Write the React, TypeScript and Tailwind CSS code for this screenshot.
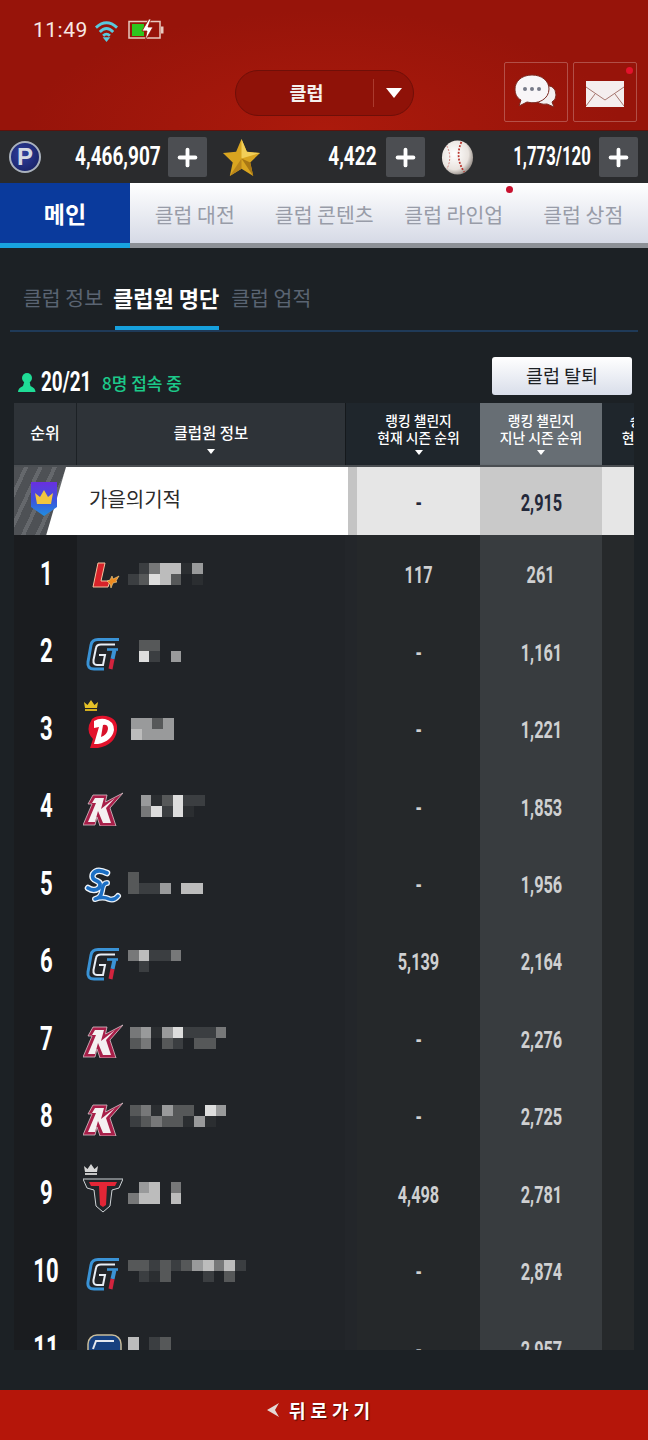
import type { ReactNode } from "react";
import { Plus } from "lucide-react";

const SHADES: Record<string, string> = {
  ".": "bg-transparent",
  "1": "bg-[#2b2e31]",
  "2": "bg-[#3b3e41]",
  "3": "bg-[#565859]",
  "4": "bg-[#777879]",
  "5": "bg-[#999a9b]",
  "6": "bg-[#bcbcbc]",
  "7": "bg-[#dddddd]",
};

type Team = "L" | "G" | "D" | "K" | "SL" | "T" | "B";

type Member = {
  rank: number;
  team: Team;
  crown?: "gold" | "silver";
  name: [string, string];
  offset: string;
  current: string;
  last: string;
};

const MEMBERS: Member[] = [
  { rank: 1, team: "L", name: [".246615", "23763.1"], offset: "ml-[5px]", current: "117", last: "261" },
  { rank: 2, team: "G", name: [".33", ".72.5"], offset: "ml-[5px]", current: "-", last: "1,161" },
  { rank: 3, team: "D", name: ["5535", "6555"], offset: "ml-[8px]", current: "-", last: "1,221", crown: "gold" },
  { rank: 4, team: "K", name: [".513722", ".47271"], offset: "ml-[7px]", current: "-", last: "1,853" },
  { rank: 5, team: "SL", name: ["3", "3225.66"], offset: "ml-[5px]", current: "-", last: "1,956" },
  { rank: 6, team: "G", name: ["46224", ".2..."], offset: "ml-[5px]", current: "5,139", last: "2,164" },
  { rank: 7, team: "K", name: ["451572224", "34.32.33"], offset: "ml-[7px]", current: "-", last: "2,276" },
  { rank: 8, team: "K", name: ["341533.75", "23433151"], offset: "ml-[7px]", current: "-", last: "2,725" },
  { rank: 9, team: "T", name: [".56.4", "466.6"], offset: "ml-[5px]", current: "4,498", last: "2,781", crown: "silver" },
  { rank: 10, team: "G", name: ["33232356462", ".213...2.3"], offset: "ml-[5px]", current: "-", last: "2,874" },
  { rank: 11, team: "B", name: ["6.23", "6.23"], offset: "ml-[5px]", current: "-", last: "2,957" },
];

const Mosaic = ({ rows, className }: { rows: [string, string]; className: string }) => (
  <div className={`flex flex-col ${className}`}>
    {rows.map((row, i) => (
      <div key={i} className="flex h-[11px]">
        {row.split("").map((c, j) => (
          <div key={j} className={`w-[10.7px] h-[11px] ${SHADES[c] ?? "bg-transparent"}`} />
        ))}
      </div>
    ))}
  </div>
);

const TeamLogo = ({ team }: { team: Team }) => {
  if (team === "L") {
    return (
      <svg viewBox="0 0 40 40" className="w-10 h-10">
        <path d="M15 9h7l-4 18h9l-2 6H10z" fill="#d8232a" stroke="#f6c3a0" strokeWidth="1" />
        <path d="M24 27l3-1 2-4 1 3 6-3-3 5 1 1-4 1-2 5-1-4z" fill="#ee8a1f" stroke="#f5d28a" strokeWidth=".6" />
      </svg>
    );
  }
  if (team === "G") {
    return (
      <svg viewBox="0 0 40 40" className="w-10 h-10" fill="none">
        <path d="M36 8.500H15Q9 8.500 8 14L5 31Q4 38 11 38H21" stroke="#3a93d6" strokeWidth="3" />
        <path d="M32 13.500H18Q13.500 13.500 13 17L10.500 29Q10 34 14 34H20L22 24H16" stroke="#e9eef5" strokeWidth="2" />
        <path d="M24 18.500H35" stroke="#3a93d6" strokeWidth="2.600" />
        <path d="M31.500 19L29.500 28" stroke="#3a93d6" strokeWidth="4" />
        <path d="M29.500 28L27.500 38" stroke="#d3243e" strokeWidth="4" />
      </svg>
    );
  }
  if (team === "D") {
    return (
      <svg viewBox="0 0 40 40" className="w-10 h-10">
        <path d="M9 10Q14 6 23 7Q35 9 34 21Q32 36 15 39L7 39L10 30Q4 24 6 16Z" fill="#e3122c" />
        <path d="M11 12Q16 9 22 10Q31 12 31 21Q29 32 15 35L11 35L16 18L11 19Z" fill="#ffffff" />
        <path d="M20 16Q25 15 25 20Q24 26 18 28Z" fill="#d8112a" />
      </svg>
    );
  }
  if (team === "K") {
    return (
      <svg viewBox="0 0 40 40" className="w-10 h-10">
        <path d="M10 9H24L22.500 16L40 7L27 22L33 40H17L14 31L12 39H0L9 18H5Z" fill="#a81f49" stroke="#d8c4ca" strokeWidth=".8" />
        <path d="M12 12H21L18 23L32 12L23 22L28 37H20L15 25L12 36H5L13 17H9Z" fill="#f4f0f1" />
      </svg>
    );
  }
  if (team === "SL") {
    return (
      <svg viewBox="0 0 40 40" className="w-10 h-10" fill="none" strokeLinecap="round" strokeLinejoin="round">
        <path d="M24 10Q14 5 10 11Q8 16 14 18Q19 20 16 25Q11 29 5 25" stroke="#eef4fa" strokeWidth="6.500" />
        <path d="M24 20Q20 20 19 28Q18 35 12 36Q20 33 26 36Q31 38 35 33" stroke="#eef4fa" strokeWidth="6" />
        <path d="M24 10Q14 5 10 11Q8 16 14 18Q19 20 16 25Q11 29 5 25" stroke="#1c6fc4" strokeWidth="3.800" />
        <path d="M24 20Q20 20 19 28Q18 35 12 36Q20 33 26 36Q31 38 35 33" stroke="#1c6fc4" strokeWidth="3.400" />
      </svg>
    );
  }
  if (team === "T") {
    return (
      <svg viewBox="0 0 40 40" className="w-10 h-10">
        <path d="M0 6H40L36 15L29 17L27 33L20 39L13 33L11 17L4 15Z" fill="#22262a" stroke="#cfd3d6" strokeWidth="1" />
        <path d="M6 9H34L32 13H24L23 32L20 34L17 32L16 13H8Z" fill="#e32636" />
      </svg>
    );
  }
  return (
    <svg viewBox="0 0 40 40" className="w-10 h-10">
      <rect x="5" y="7" width="33" height="30" rx="9" fill="#17407f" stroke="#c9bc9a" strokeWidth="1.500" />
      <path d="M10 21L13 13H31" fill="none" stroke="#e5e8ef" strokeWidth="2" />
    </svg>
  );
};

const Crown = ({ color }: { color: "gold" | "silver" }) => (
  <svg viewBox="0 0 16 11" className="absolute -top-[9px] left-0 w-4 h-[11px]">
    <path d="M1 2l3.500 3L8 0l3.500 5L15 2l-1 6H2z" fill={color === "gold" ? "#e6c228" : "#d6d6d6"} />
    <rect x="2" y="9" width="12" height="2" fill={color === "gold" ? "#d2ae1e" : "#c4c4c4"} />
  </svg>
);

const Num = ({ children, className }: { children: ReactNode; className: string }) => (
  <span className={`inline-block whitespace-nowrap font-['Roboto',sans-serif] font-bold ${className}`}>{children}</span>
);

const PlusButton = () => (
  <div className="flex items-center justify-center w-[39px] h-[40px] shrink-0 rounded-[2px] bg-[#4c4e52]">
    <Plus size={27} strokeWidth={3.4} className="text-white" />
  </div>
);

const Caret = () => (
  <div className="mx-auto mt-[4px] w-0 h-0 border-x-[4px] border-x-transparent border-t-[5px] border-t-white" />
);

const Wifi = () => (
  <svg viewBox="0 0 26 24" className="w-[25px] h-[23px]" fill="none" stroke="#59c9de" strokeWidth="3">
    <path d="M2 9Q13-1 24 9" />
    <path d="M6 13.500Q13 6.500 20 13.500" />
    <path d="M9.500 17.500Q13 14 16.500 17.500" />
    <path d="M13 24l-4-5h8z" fill="#59c9de" stroke="none" />
  </svg>
);

const Battery = () => (
  <svg viewBox="0 0 36 22" className="w-[36px] h-[22px]">
    <rect x="1" y="2.500" width="31" height="16.500" fill="none" stroke="#e7c9bf" strokeWidth="1.500" />
    <rect x="4" y="5" width="12" height="12" fill="#2ec51d" />
    <rect x="33" y="7.500" width="2.500" height="7" fill="#e7c9bf" />
    <path d="M21 0l-7 12h5l-2 10 8-14h-5l3-8z" fill="#ffffff" stroke="#971409" strokeWidth=".8" />
  </svg>
);

const ChatIcon = () => (
  <svg viewBox="0 0 44 36" className="w-[44px] h-[36px]">
    <path d="M26 12Q42 9 42 21Q42 26 38 28L40 33L33 30Q26 31 23 27Z" fill="#f3eff0" stroke="#7b2a22" strokeWidth="1" />
    <path d="M18 1C7 1 1 8 1 15C1 20 3 24 7 26L5 32L13 28C24 31 35 25 35 15C35 7 28 1 18 1Z" fill="#f8f6f8" stroke="#7b2a22" strokeWidth="1" />
    <circle cx="11" cy="15" r="2" fill="#767a88" />
    <circle cx="18" cy="15" r="2" fill="#767a88" />
    <circle cx="25" cy="15" r="2" fill="#767a88" />
  </svg>
);

const MailIcon = () => (
  <svg viewBox="0 0 38 26" className="w-[38px] h-[26px] mt-[3px]">
    <rect x="0" y="0" width="38" height="26" fill="#f4eeee" />
    <path d="M0 6L19 19L38 6M0 25L9 13M38 25L29 13" fill="none" stroke="#a5766f" strokeWidth="1" />
  </svg>
);

const PCoin = () => (
  <div className="flex items-center justify-center w-[32px] h-[32px] shrink-0 rounded-full border-2 border-[#aab2bd] bg-[radial-gradient(circle_at_40%_40%,#2f3f9e,#141c5a)]">
    <span className="font-['Liberation_Sans',sans-serif] font-bold text-[24px] leading-none text-[#d5d9e2]">P</span>
  </div>
);

const StarIcon = () => (
  <svg viewBox="0 0 40 40" className="w-[39px] h-[39px] shrink-0">
    <path d="M20 1l5.500 13L39 15.500 29 25l3 14-12-7.500L8 39l3-14L1 15.500 14.500 14z" fill="#d9a520" />
    <path d="M20 1l5.500 13L39 15.500 20 21z" fill="#f2cf58" />
    <path d="M20 21L8 39l12-7.500z" fill="#b9851a" />
    <path d="M20 21l12 18-3-14z" fill="#a87714" />
  </svg>
);

const BallIcon = () => (
  <svg viewBox="0 0 34 36" className="w-[33px] h-[35px] shrink-0">
    <defs>
      <radialGradient id="ball" cx="40%" cy="40%" r="65%">
        <stop offset="0%" stopColor="#ffffff" />
        <stop offset="70%" stopColor="#e9e3de" />
        <stop offset="100%" stopColor="#8f8781" />
      </radialGradient>
    </defs>
    <ellipse cx="17" cy="18" rx="16" ry="17.500" fill="url(#ball)" />
    <path d="M21 2Q14 18 24 33" fill="none" stroke="#b8332c" strokeWidth="1.800" strokeDasharray="2 1.500" />
    <path d="M6 6Q12 18 6 30" fill="none" stroke="#cf7a74" strokeWidth="1" strokeDasharray="2 1.500" />
  </svg>
);

const Shield = () => (
  <svg viewBox="0 0 28 36" className="w-[28px] h-[36px]">
    <defs>
      <linearGradient id="shield" x1="0" y1="0" x2="0" y2="1">
        <stop offset="0%" stopColor="#6a2fe0" />
        <stop offset="55%" stopColor="#3b55dc" />
        <stop offset="100%" stopColor="#1f8fe0" />
      </linearGradient>
    </defs>
    <path d="M1 1H27V26L14 35L1 26Z" fill="url(#shield)" />
    <path d="M5 12L10 16L14 9L18 16L23 12L21 23H7Z" fill="#f2c53d" />
  </svg>
);

const TopTabs = () => {
  const tabs = ["클럽 대전", "클럽 콘텐츠", "클럽 라인업", "클럽 상점"];
  return (
    <div className="flex h-[65px] shrink-0">
      <div className="flex items-center justify-center w-[130px] bg-[#0a3a9c] border-b-[5px] border-[#18a3e0]">
        <span className="text-[23px] font-bold text-white">메인</span>
      </div>
      <div className="relative flex flex-1 bg-gradient-to-b from-white to-[#d6dae6] border-b-[5px] border-[#8d9197]">
        {tabs.map((tab) => (
          <div key={tab} className="flex flex-1 items-center justify-center pt-[2px] text-[20.500px] text-[#989ca8]">
            {tab}
          </div>
        ))}
        <div className="absolute left-[376px] top-[3px] w-[7px] h-[7px] rounded-full bg-[#c8102e]" />
      </div>
    </div>
  );
};

const CurrencyBar = () => (
  <div className="grid grid-cols-3 h-[52px] shrink-0 bg-[#2a2b2d]">
    <div className="flex items-center pl-[9px] pr-[9px]">
      <PCoin />
      <div className="flex-1 text-right pr-[7px]">
        <Num className="text-[25px] text-white origin-right scale-x-[0.76]">4,466,907</Num>
      </div>
      <PlusButton />
    </div>
    <div className="flex items-center pl-[6px] pr-[7px]">
      <StarIcon />
      <div className="flex-1 text-right pr-[9px]">
        <Num className="text-[25px] text-white origin-right scale-x-[0.76]">4,422</Num>
      </div>
      <PlusButton />
    </div>
    <div className="flex items-center pl-[9px] pr-[10px]">
      <BallIcon />
      <div className="flex-1 text-right pr-[8px]">
        <Num className="text-[25px] text-white origin-right scale-x-[0.67]">1,773/120</Num>
      </div>
      <PlusButton />
    </div>
  </div>
);

const TableHeader = () => (
  <div className="grid grid-cols-[63px_268px_12px_123px_122px_32px] h-[62px] shrink-0 text-white text-[13.800px] leading-[17px] font-medium text-center">
    <div className="flex items-center justify-center pb-[3px] bg-[#2e3338] border-r border-[#1c2125] text-[16px]">순위</div>
    <div className="flex flex-col items-center pt-[20px] bg-[#2e3338] text-[15.500px] leading-[18px]">
      <span>클럽원 정보</span>
      <div className="mt-[4px]">
        <Caret />
      </div>
    </div>
    <div className="bg-[#1f262c] border-l border-[#15191c]" />
    <div className="flex flex-col items-center justify-center pb-[1px] bg-[#1f262c]">
      <span>랭킹 챌린지</span>
      <span>현재 시즌 순위</span>
      <Caret />
    </div>
    <div className="flex flex-col items-center justify-center pb-[1px] bg-[#676e74]">
      <span>랭킹 챌린지</span>
      <span>지난 시즌 순위</span>
      <Caret />
    </div>
    <div className="overflow-hidden bg-[#1f262c]">
      <div className="flex flex-col items-center justify-center w-[122px] h-[62px] pb-[1px] whitespace-nowrap">
        <span>승리 챌린지</span>
        <span>현재 시즌 승리</span>
        <Caret />
      </div>
    </div>
  </div>
);

const MyRow = () => (
  <div className="grid grid-cols-[334px_9px_123px_122px_32px] h-[70px] shrink-0 border-t-[2px] border-[#4a4e52] text-[#23283a] shadow-[0_2px_3px_rgba(0,0,0,0.6)]">
    <div className="relative flex items-center bg-white pl-[75px] pb-[4px] text-[20px] text-[#2b2b2b]">
      <div className="absolute left-0 top-0 bottom-0 w-[52px] bg-[repeating-linear-gradient(115deg,#4e5155_0px,#4e5155_9px,#65686c_9px,#65686c_13px)] [clip-path:polygon(0_0,100%_0,62%_100%,0_100%)]" />
      <div className="absolute left-[16px] top-[14px]">
        <Shield />
      </div>
      가을의기적
    </div>
    <div className="bg-[#c4c4c4]" />
    <div className="flex items-center justify-center pt-[3px] bg-[#e6e6e6]">
      <Num className="text-[24px] scale-x-[0.68]">-</Num>
    </div>
    <div className="flex items-center justify-center pt-[3px] bg-[#c9c9c9]">
      <Num className="text-[24px] scale-x-[0.68]">2,915</Num>
    </div>
    <div className="bg-[#e6e6e6]" />
  </div>
);

const MemberRow = ({ member }: { member: Member }) => (
  <div className="grid grid-cols-[63px_268px_12px_123px_122px_32px] h-[77.440px] shrink-0 text-[#cfd0d1]">
    <div className="flex items-center justify-center pl-[1px] bg-[#1a1c1f]">
      <Num className="text-[33px] text-white scale-x-[0.67]">{member.rank}</Num>
    </div>
    <div className="flex items-center pl-[6px] bg-[#212428]">
      <div className="relative w-10 h-10 shrink-0">
        <TeamLogo team={member.team} />
        {member.crown && <Crown color={member.crown} />}
      </div>
      <Mosaic rows={member.name} className={member.offset} />
    </div>
    <div className="bg-[#23262a]" />
    <div className="flex items-center justify-center pt-[3px] bg-[#25282a]">
      <Num className="text-[24px] scale-x-[0.68]">{member.current}</Num>
    </div>
    <div className="flex items-center justify-center pt-[3px] bg-[#383c3f]">
      <Num className="text-[24px] scale-x-[0.68]">{member.last}</Num>
    </div>
    <div className="bg-[#26292b]" />
  </div>
);

const App = () => {
  return (
    <div className="flex flex-col w-[648px] h-[1440px] overflow-hidden bg-[#1c2125] font-['Noto_Sans_CJK_KR',sans-serif]">
      <header className="relative flex flex-col h-[131px] shrink-0 bg-[radial-gradient(ellipse_at_50%_100%,#ab1a0c,#97140a_65%)] border-b border-[#5d120c]">
        <div className="flex items-center h-[22px] mt-[19px] pl-[33px]">
          <span className="w-[61px] font-['Roboto',sans-serif] text-[21px] leading-none tracking-[0.5px] text-[#f7e9e4]">11:49</span>
          <Wifi />
          <div className="ml-[9px]">
            <Battery />
          </div>
        </div>
        <div className="flex mt-[21px] h-[60px] pl-[504px] gap-[5px]">
          <div className="flex items-center justify-center w-[64px] h-[60px] border border-[#ffffff40] rounded-[2px]">
            <ChatIcon />
          </div>
          <div className="relative flex items-center justify-center w-[64px] h-[60px] border border-[#ffffff40] rounded-[2px]">
            <MailIcon />
            <div className="absolute right-[3px] top-[4px] w-[7px] h-[7px] rounded-full bg-[#e3122c]" />
          </div>
        </div>
        <div className="absolute left-[235px] top-[70px] flex items-center w-[179px] h-[46px] rounded-full bg-[#8f1208] border border-[#6f0f08]">
          <span className="w-[137px] pl-[4px] text-center text-[18.500px] font-bold text-[#f5f0ee]">클럽</span>
          <div className="w-px h-[28px] bg-[#ab3a2e]" />
          <div className="ml-[12px] w-0 h-0 border-x-[8px] border-x-transparent border-t-[10px] border-t-white" />
        </div>
      </header>

      <CurrencyBar />
      <TopTabs />

      <main className="flex flex-col flex-1 min-h-0">
        <div className="flex items-center h-[84px] mx-[10px] shrink-0 border-b-[2px] border-[#1f3a58] pt-[16px] pl-[13px] text-[20.500px] text-[#5a6472]">
          <span>클럽 정보</span>
          <span className="relative ml-[10px] text-[22px] font-bold text-white">
            클럽원 명단
            <span className="absolute left-[2px] right-0 -bottom-[16px] h-[4px] bg-[#16a0dd]" />
          </span>
          <span className="ml-[12px]">클럽 업적</span>
        </div>

        <div className="flex items-center justify-between h-[71px] shrink-0 ml-[18px] mr-[16px]">
          <div className="flex items-center mt-[29px]">
            <svg viewBox="0 0 18 20" className="w-[18px] h-[20px]">
              <circle cx="9" cy="6" r="5" fill="#1fdc96" />
              <path d="M6.500 9h5l1 5q5 2 5 6H0q0-4 5-6z" fill="#1fdc96" />
            </svg>
            <div className="w-[50px] ml-[5px] whitespace-nowrap">
              <Num className="text-[27px] leading-none text-white origin-left scale-x-[0.7]">20/21</Num>
            </div>
            <span className="ml-[11px] text-[17px] leading-none font-medium text-[#1cc98a]">8명 접속 중</span>
          </div>
          <div className="flex items-center justify-center w-[140px] h-[38px] mt-[17px] rounded-[3px] bg-gradient-to-b from-white to-[#d9deea] text-[18.500px] text-[#1c2125]">
            클럽 탈퇴
          </div>
        </div>

        <div className="flex flex-col ml-[14px] w-[620px] h-[947px] shrink-0 overflow-hidden">
          <TableHeader />
          <MyRow />
          {MEMBERS.map((member) => (
            <MemberRow key={member.rank} member={member} />
          ))}
        </div>
      </main>

      <footer className="flex items-center justify-center h-[50px] shrink-0 gap-[10px] pb-[10px] pr-[6px] bg-[#b5160a] text-white">
        <svg viewBox="0 0 12 14" className="w-[12px] h-[14px]">
          <path d="M0 7L12 0L8 7L12 14Z" fill="#e4d9d6" />
        </svg>
        <span className="text-[18px] font-bold tracking-[5px] [text-shadow:1px_1px_1px_rgba(0,0,0,0.6)]">뒤로가기</span>
      </footer>
    </div>
  );
};

export default App;
